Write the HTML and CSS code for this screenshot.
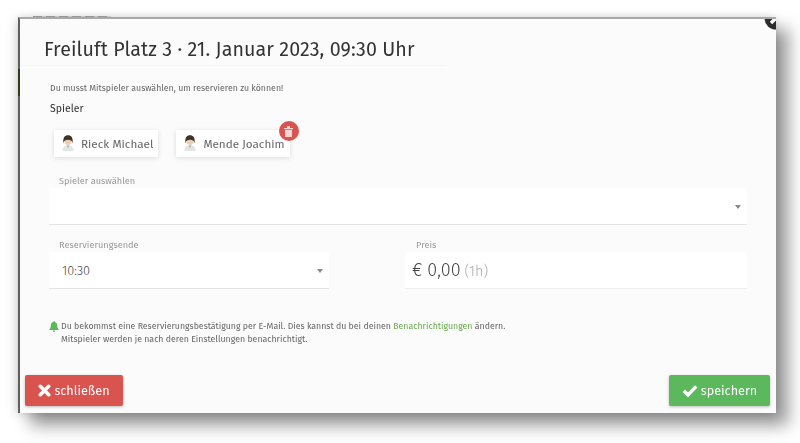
FILE: index.html
```html
<!DOCTYPE html>
<html lang="de">
<head>
<meta charset="utf-8">
<title>Reservierung</title>
<link rel="stylesheet" href="styles.css">
</head>
<body>
<div class="backdrop-text"></div>
<main class="modal">
  <div class="backdrop-tab"></div>
  <svg class="close" width="24" height="24" viewBox="0 0 24 24"><circle cx="12" cy="12" r="11.500" fill="#2b2b2b"/><path d="M7 7l10 10M17 7L7 17" stroke="#fff" stroke-width="3.400"/></svg>
  <header class="modal-head"><h1>Freiluft Platz 3 · 21. Januar 2023, 09:30 Uhr</h1></header>
  <section class="modal-body">
    <p class="hint">Du musst Mitspieler auswählen, um reservieren zu können!</p>
    <h2 class="players-title">Spieler</h2>
    <div class="players">
      <div class="chip">
        <svg class="avatar" width="12" height="16" viewBox="0 0 12 16"><path d="M.5 16c0-4 1.500-5.500 5.500-5.500s5.500 1.500 5.500 5.500z" fill="#e2e5e5"/><path d="M4.500 10.500h3L6 13z" fill="#aab4b4"/><circle cx="6" cy="6.300" r="3.600" fill="#eccfb3"/><path d="M1.500 8.500C.5 2.500 3 .3 6 .3s5.500 2.200 4.500 8.200C10.200 5.500 8.500 4.800 6 4.800S1.800 5.500 1.500 8.500z" fill="#3f3228"/></svg>
        <span>Rieck Michael</span>
      </div>
      <div class="chip">
        <svg class="avatar" width="12" height="16" viewBox="0 0 12 16"><path d="M.5 16c0-4 1.500-5.500 5.500-5.500s5.500 1.500 5.500 5.500z" fill="#e2e5e5"/><path d="M4.500 10.500h3L6 13z" fill="#aab4b4"/><circle cx="6" cy="6.300" r="3.600" fill="#eccfb3"/><path d="M1.500 8.500C.5 2.500 3 .3 6 .3s5.500 2.200 4.500 8.200C10.200 5.500 8.500 4.800 6 4.800S1.800 5.500 1.500 8.500z" fill="#3f3228"/></svg>
        <span>Mende Joachim</span>
        <span class="trash"><svg width="9" height="11" viewBox="0 0 9 11"><path d="M0 2h9v1.200H0zM3 .3h3V2H3zM1 4h7v7H1z" fill="#f3d6d6"/></svg></span>
      </div>
    </div>
    <div class="field field-players">
      <label class="field-label">Spieler auswählen</label>
      <div class="select select-full"><i class="caret"></i></div>
    </div>
    <div class="field-row">
      <div class="field half">
        <label class="field-label">Reservierungsende</label>
        <div class="select"><span class="value">10:30</span><i class="caret"></i></div>
      </div>
      <div class="field half price-field">
        <label class="field-label">Preis</label>
        <div class="price"><span class="amount">€ 0,00</span> <span class="dur">(1h)</span></div>
      </div>
    </div>
    <div class="note">
      <svg class="bell" width="10" height="11" viewBox="0 0 10 11"><path d="M5 0c.5 0 .8.400.8.900C7.500 1.300 8.200 2.700 8.200 4.500c0 2 .6 3 1.500 3.800V9H.3v-.7c.9-.8 1.500-1.800 1.500-3.800C1.800 2.700 2.500 1.300 4.200.9 4.200.400 4.500 0 5 0zM3.800 9.500h2.400C6.100 10.300 5.600 11 5 11s-1.100-.7-1.200-1.500z" fill="#5cb85c"/></svg>
      <p>Du bekommst eine Reservierungsbestätigung per E-Mail. Dies kannst du bei deinen <a href="#">Benachrichtigungen</a> ändern.<br>Mitspieler werden je nach deren Einstellungen benachrichtigt.</p>
    </div>
  </section>
  <footer class="modal-foot">
    <button class="btn btn-red"><svg width="13" height="13" viewBox="0 0 13 13"><path d="M2.300 2.300l8.400 8.400M10.700 2.300l-8.400 8.400" stroke="#fff" stroke-width="3.600" stroke-linecap="round"/></svg>schließen</button>
    <button class="btn btn-green"><svg width="16" height="13" viewBox="0 0 16 13"><path d="M1.800 6.800l4.200 4.200 8.200-8.600" fill="none" stroke="#fff" stroke-width="3.400"/></svg>speichern</button>
  </footer>
</main>
</body>
</html>
```

FILE: styles.css
```css
* { box-sizing: border-box; }
html, body { margin: 0; padding: 0; }
body {
  width: 800px;
  height: 443px;
  overflow: hidden;
  position: relative;
  background: #fff;
  font-family: "Fira Sans", "Noto Sans", sans-serif;
  color: #444;
}
.backdrop-text {
  position: absolute; left: 33px; top: 16px; width: 78px; height: 2px;
  background: repeating-linear-gradient(90deg, #aaa 0 9px, #ddd 9px 13px);
}
.modal {
  position: absolute;
  left: 18px; top: 17px;
  width: 758px; height: 396px;
  background: #fbfbfb;
  border-left: 2px solid #5f5f5f;
  border-top: 2px solid #a9a9a9;
  box-shadow: 12px 12px 16px rgba(0,0,0,.42), -3px 2px 10px rgba(0,0,0,.12), 0 -2px 8px rgba(0,0,0,.07);
  display: flex;
  flex-direction: column;
  filter: blur(.3px);
}
.backdrop-tab { position: absolute; left: -2px; top: 50px; width: 2px; height: 27px; background: #2f3d1a; }
.close { position: absolute; right: -12px; top: -13px; clip-path: inset(13px 12px 0 0); }
.modal-head { padding: 18px 24px 0; height: 47px; margin-right: 330px; border-bottom: 1px solid #f6f6f6; }
h1 { margin: 0; font-size: 19.650px; font-weight: 400; line-height: 25px; color: #333; letter-spacing: .1px; }
.modal-body { flex: 1; padding: 16px 29px 0; }
.hint { margin: 0 0 0 1px; font-size: 8.770px; line-height: 12px; color: #666; }
.players-title { margin: 8px 0 0 1px; font-size: 10.500px; font-weight: 400; line-height: 14px; color: #333; }
.players { display: flex; gap: 18px; padding: 14px 5px 0; }
.chip {
  position: relative;
  display: flex; align-items: center; gap: 7px;
  height: 27px; padding: 0 5px 0 8px;
  background: #fff;
  box-shadow: 0 1px 5px rgba(0,0,0,.13);
  font-size: 11.700px; color: #666;
}
.avatar { flex: none; margin-top: -2px; }
.trash {
  position: absolute; right: -9px; top: -9px;
  width: 20px; height: 20px; border-radius: 50%;
  background: #d9534f; display: flex; align-items: center; justify-content: center;
}
.field { padding-top: 8px; }
.field-players { padding-top: 17px; }
.field-label { display: block; padding-left: 10px; font-size: 9.200px; line-height: 13px; color: #999; margin-bottom: 1px; }
.select {
  position: relative;
  display: flex; align-items: center;
  height: 37px; padding-left: 13px;
  background: #fff;
  border-bottom: 1px solid #e4e4e4;
}
.caret {
  position: absolute; right: 6px; top: 17px;
  border: 3.500px solid transparent; border-top: 4px solid #888; border-bottom: 0;
}
.value { font-size: 12.700px; color: #444; font-weight: 300; }
.field-row { display: flex; gap: 76px; padding-top: 5px; }
.half { flex: none; width: 280px; }
.price-field { width: 342px; }
.price-field .field-label { padding-left: 11px; }
.price { height: 37px; display: flex; align-items: baseline; gap: 4px; padding: 7px 7px 0; background: #fff; border-bottom: 1px solid #f0f0f0; }
.amount { font-size: 18px; color: #444; font-weight: 300; }
.dur { font-size: 14.500px; color: #aaa; font-weight: 300; }
.note { display: flex; gap: 2px; padding-top: 31px; font-size: 8.780px; line-height: 12.500px; color: #666; }
.bell { flex: none; margin-top: 1px; }
.note p { margin: 0; }
.note a { color: #6aa84f; text-decoration: none; }
.modal-foot { display: flex; justify-content: space-between; padding: 0 6px 7px 5px; }
.btn {
  display: flex; align-items: center; justify-content: center; gap: 3px;
  height: 31px; border: 0; border-radius: 2px;
  color: #fff; font: inherit; font-size: 12.600px;
  box-shadow: 0 1px 3px rgba(0,0,0,.25);
  padding: 0;
}
.btn-red { width: 98px; background: #d9534f; }
.btn-green { width: 101px; background: #5cb85c; }
```
